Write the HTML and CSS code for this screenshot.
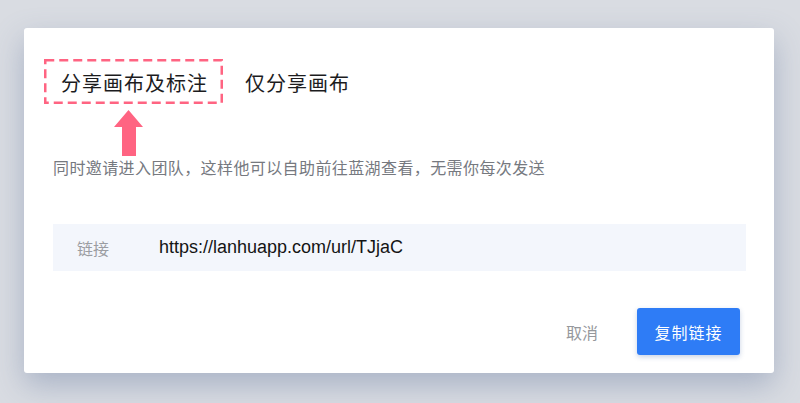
FILE: index.html
```html
<!DOCTYPE html>
<html lang="zh">
<head>
<meta charset="utf-8">
<link rel="stylesheet" href="styles.css">
</head>
<body>
<div class="card">
  <div class="tabs">
    <div class="tab tab-first">分享画布及标注</div>
    <div class="tab">仅分享画布</div>
  </div>
  <svg class="annot-box" width="179" height="45" viewBox="0 0 179 45">
    <rect x="1.25" y="1.25" width="176.5" height="42.5" fill="none" stroke="#ff6482" stroke-width="2.5" stroke-dasharray="9 5"/>
  </svg>
  <svg class="annot-arrow" width="30" height="46" viewBox="0 0 30 46">
    <polygon points="14.5,0 29,17 22,17 22,46 8,46 8,17 0,17" fill="#ff6482"/>
  </svg>
  <p class="desc">同时邀请进入团队，这样他可以自助前往蓝湖查看，无需你每次发送</p>
  <div class="link-row">
    <span class="link-label">链接</span>
    <span class="link-url">https://lanhuapp.com/url/TJjaC</span>
  </div>
  <div class="footer">
    <span class="btn-cancel">取消</span>
    <span class="btn-primary">复制链接</span>
  </div>
</div>
</body>
</html>
```
FILE: styles.css
```css
html, body {
  margin: 0;
  padding: 0;
}
body {
  width: 800px;
  height: 403px;
  overflow: hidden;
  background: #d9dce2;
  font-family: "Noto Sans CJK SC", "Noto Sans", sans-serif;
  padding: 28px 0 0 24px;
  box-sizing: border-box;
}
.card {
  position: relative;
  width: 750px;
  height: 345px;
  box-sizing: border-box;
  background: #ffffff;
  border-radius: 3px;
  box-shadow: 0 12px 30px rgba(110, 128, 165, 0.45);
  padding: 38px 28px 18px 29px;
  display: flex;
  flex-direction: column;
}
.tabs {
  display: flex;
  gap: 37px;
  height: 32px;
  align-items: center;
  font-size: 20px;
  letter-spacing: 1px;
  color: #1c1c1e;
}
.tab-first {
  margin-left: 8px;
}
.annot-box {
  position: absolute;
  left: 20px;
  top: 31px;
}
.annot-arrow {
  position: absolute;
  left: 90px;
  top: 82px;
}
.desc {
  margin: 58px 0 0 0;
  font-size: 16px;
  line-height: 22px;
  letter-spacing: 0.4px;
  color: #76797f;
}
.link-row {
  margin-top: 46px;
  height: 47px;
  background: #f3f6fc;
  display: flex;
  align-items: center;
  padding-left: 24px;
}
.link-label {
  font-size: 16px;
  color: #9b9da2;
  width: 82px;
}
.link-url {
  font-family: "Liberation Sans", Arial, sans-serif;
  font-size: 18px;
  color: #141414;
}
.footer {
  margin-top: 37px;
  margin-right: 6px;
  display: flex;
  justify-content: flex-end;
  align-items: center;
  gap: 39px;
}
.btn-cancel {
  font-size: 16px;
  color: #96989c;
}
.btn-primary {
  width: 103px;
  height: 47px;
  border-radius: 3px;
  background: #2e7cf6;
  color: #ffffff;
  font-size: 16px;
  letter-spacing: 1px;
  display: flex;
  align-items: center;
  justify-content: center;
  box-shadow: 0 2px 5px rgba(40, 80, 150, 0.25);
}
```
